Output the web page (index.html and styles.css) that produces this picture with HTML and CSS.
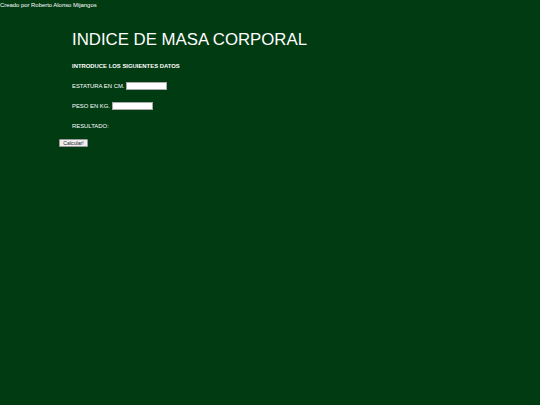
FILE: index.html
```html
<!DOCTYPE html>
<html lang="es">
<head>
<meta charset="utf-8">
<title>Indice de Masa Corporal</title>
<link rel="stylesheet" href="styles.css">
</head>
<body>
<div class="credit">Creado por Roberto Alonso Mijangos</div>
<main class="main">
  <h1 class="title">INDICE DE MASA CORPORAL</h1>
  <p class="subtitle">INTRODUCE LOS SIGUIENTES DATOS</p>
  <form class="form">
    <div class="row"><label>ESTATURA EN CM.</label><input class="field" type="text"></div>
    <div class="row"><label>PESO EN KG.</label><input class="field" type="text"></div>
    <div class="row">RESULTADO:</div>
    <button type="button" class="btn">Calcular!</button>
  </form>
</main>
</body>
</html>
```
FILE: styles.css
```css
html, body {
  margin: 0;
  padding: 0;
  background: #013b12;
  height: 100%;
}
body {
  font-family: "Liberation Sans", Arial, sans-serif;
  color: #ffffff;
}
.credit {
  font-size: 5.9px;
  line-height: 10px;
}
.main {
  padding-left: 59px;
}
.title {
  margin: 20px 0 0 13px;
  font-weight: normal;
  font-size: 16.8px;
  line-height: 20px;
}
.subtitle {
  margin: 12px 0 0 13px;
  font-size: 5.9px;
  font-weight: bold;
  line-height: 8px;
}
.form {
  margin: 0;
}
.row {
  margin: 12px 0 0 13px;
  height: 8px;
  display: flex;
  align-items: center;
  gap: 2px;
  font-size: 5.9px;
}
.field {
  box-sizing: border-box;
  width: 41px;
  height: 8px;
  margin: 0;
  padding: 0;
  border: 1px solid #a9a9a9;
  background: #ffffff;
}
.btn {
  margin-top: 9px;
  box-sizing: border-box;
  width: 29px;
  height: 8px;
  padding: 0;
  font-family: "Liberation Sans", Arial, sans-serif;
  font-size: 5.2px;
  line-height: 6px;
  color: #222222;
  background: #efefef;
  border: 1px solid #9a9a9a;
  border-radius: 1px;
}
```
